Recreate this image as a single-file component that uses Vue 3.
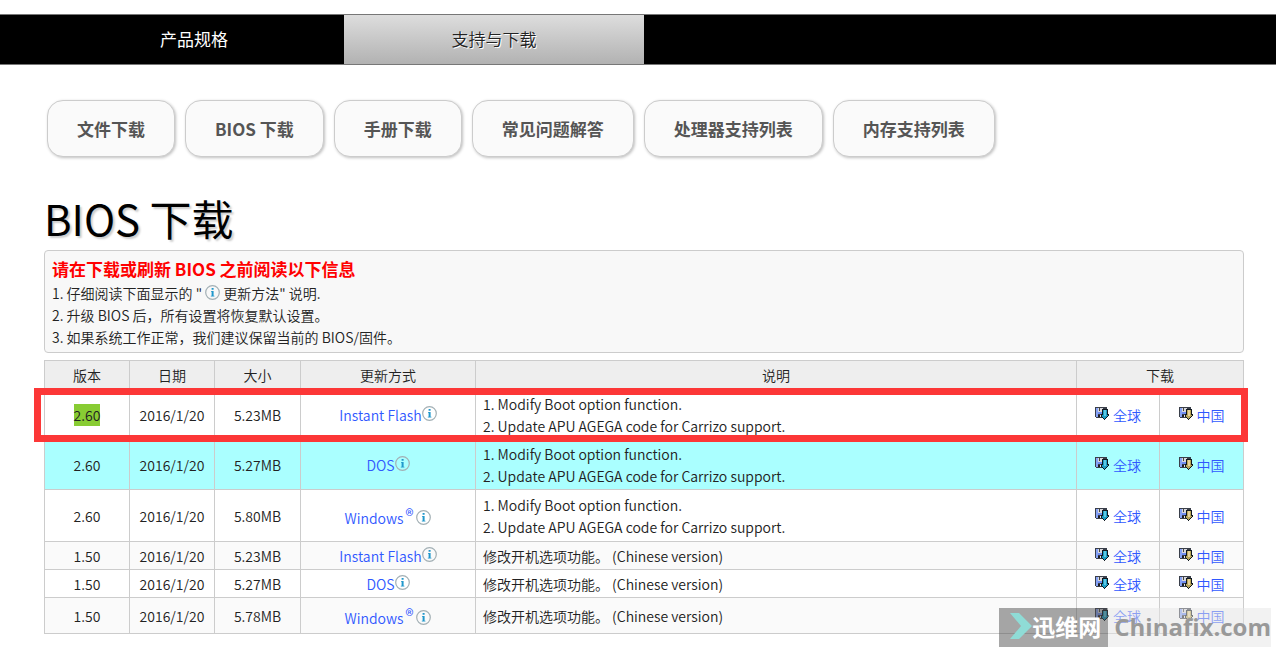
<script setup>
const jumps = ['文件下载', 'BIOS 下载', '手册下载', '常见问题解答', '处理器支持列表', '内存支持列表']
const en = ['1. Modify Boot option function.', '2. Update APU AGEGA code for Carrizo support.']
const zh = ['修改开机选项功能。 (Chinese version)']
const rows = [
  { ver: '2.60', size: '5.23MB', how: 'Instant Flash', notes: en, kind: 'tall', marked: true },
  { ver: '2.60', size: '5.27MB', how: 'DOS', notes: en, kind: 'tall hover' },
  { ver: '2.60', size: '5.80MB', how: 'Windows', reg: true, notes: en, kind: 'taller' },
  { ver: '1.50', size: '5.23MB', how: 'Instant Flash', notes: zh, kind: 'short alt' },
  { ver: '1.50', size: '5.27MB', how: 'DOS', notes: zh, kind: 'short' },
  { ver: '1.50', size: '5.78MB', how: 'Windows', reg: true, notes: zh, kind: 'mid alt' }
]
const mirrors = [
  { label: '全球', arrow: '#1b9cc4', shine: '#5cc8e4' },
  { label: '中国', arrow: '#b8a558', shine: '#e8d49c' }
]
</script>

<template>
  <div class="page">
    <nav class="tabs">
      <a href="#" class="tab">产品规格</a>
      <a href="#" class="tab active">支持与下载</a>
    </nav>

    <main class="content">
      <div class="jumps">
        <a v-for="j in jumps" :key="j" href="#" class="jump">{{ j }}</a>
      </div>

      <h1>BIOS 下载</h1>

      <section class="notice">
        <strong>请在下载或刷新 BIOS 之前阅读以下信息</strong>
        <p>
          1. 仔细阅读下面显示的 "
          <svg class="info" viewBox="0 0 15 15"><circle cx="7.5" cy="7.5" r="6.8" fill="none" stroke="#a3b0b5" stroke-width="1.2" /><path d="M6.6 3h2v1.7h-2zM6 6h2.6v4.8h.8v.8H5.800v-.8h.8V6.800H6z" fill="#2098cc" /></svg>
          更新方法" 说明.
        </p>
        <p>2. 升级 BIOS 后，所有设置将恢复默认设置。</p>
        <p>3. 如果系统工作正常，我们建议保留当前的 BIOS/固件。</p>
      </section>

      <div class="table-wrap">
        <table>
          <colgroup>
            <col class="c-ver" /><col class="c-ver" /><col class="c-size" /><col class="c-how" />
            <col /><col class="c-world" /><col class="c-china" />
          </colgroup>
          <thead>
            <tr>
              <th>版本</th><th>日期</th><th>大小</th><th>更新方式</th><th>说明</th><th colspan="2">下载</th>
            </tr>
          </thead>
          <tbody>
            <tr v-for="(r, i) in rows" :key="i" :class="r.kind">
              <td><mark v-if="r.marked">{{ r.ver }}</mark><template v-else>{{ r.ver }}</template></td>
              <td>2016/1/20</td>
              <td>{{ r.size }}</td>
              <td>
                <div class="how" :class="{ low: r.reg }">
                  <a href="#">{{ r.how }}<sup v-if="r.reg">®</sup></a>
                  <svg class="info" viewBox="0 0 15 15"><circle cx="7.5" cy="7.5" r="6.8" fill="none" stroke="#a3b0b5" stroke-width="1.2" /><path d="M6.6 3h2v1.7h-2zM6 6h2.6v4.8h.8v.8H5.800v-.8h.8V6.800H6z" fill="#2098cc" /></svg>
                </div>
              </td>
              <td class="desc"><div v-for="n in r.notes" :key="n">{{ n }}</div></td>
              <td v-for="m in mirrors" :key="m.label">
                <a href="#" class="dl">
                  <svg class="disk" viewBox="0 0 14 13" shape-rendering="crispEdges">
                    <path d="M0 0h12v11H1V10H0z" fill="#3a3f4a" />
                    <path d="M1 1h2v9H1z" fill="#86a2f4" />
                    <path d="M3 5h4v2H3z" fill="#6f8cf0" />
                    <path d="M3 1h5v4H3z" fill="#d8d8dc" />
                    <path d="M4 1h1v3H4z" fill="#444" />
                    <path d="M3 8h3v2H3z" fill="#1c1c22" />
                    <path d="M5 8h1v2H5z" fill="#e8e8e8" />
                    <path d="M7 2h6v5h1v2h-1v1h-1v1h-1v1h-1v1H9v-1H8v-1H7v-1H6V7h1z" fill="#101820" />
                    <path d="M8 3h4v5h1v1h-1v1h-1v1h-1v1H9v-1H8v-1H7V8h1z" :fill="m.arrow" />
                    <path d="M9 3h2v6H9z" :fill="m.shine" />
                  </svg>
                  <span>{{ m.label }}</span>
                </a>
              </td>
            </tr>
          </tbody>
        </table>
        <div class="frame"></div>
      </div>
    </main>

    <div class="watermark">
      <div class="wm-brand">
        <svg viewBox="0 0 22 26"><path d="M0 0h9l13 13L9 26H0l11-13z" fill="#8fdcd6" /></svg>
        <span>迅维网</span>
      </div>
      <div class="wm-site">Chinafix.com</div>
    </div>
  </div>
</template>

<style>
body {
  background: #fff;
}
</style>

<style scoped>
.page {
  position: relative;
  padding: 14px 0 18px;
  font-family: "Noto Sans CJK SC", sans-serif;
  font-weight: 350;
  font-size: 14px;
  line-height: 22px;
  color: #222;
}
a {
  color: #3058ff;
  text-decoration: none;
}
.tabs {
  display: flex;
  height: 49px;
  padding-left: 44px;
  background: #000;
  border-top: 1px solid #777;
  border-bottom: 1px solid #777;
}
.tab {
  width: 300px;
  text-align: center;
  font-size: 17px;
  line-height: 47px;
  font-weight: 400;
  color: #fff;
}
.tab.active {
  color: #222;
  font-weight: 350;
  background: linear-gradient(#ddd, #b2b2b2);
  text-shadow: 1px 1px 0 #fff;
}
.content {
  margin: 0 32px 0 44px;
}
.jumps {
  display: flex;
  gap: 10px;
  padding: 35px 3px 0;
}
.jump {
  padding: 0 29px;
  line-height: 55px;
  font-size: 17px;
  font-weight: 700;
  color: #555;
  background: #fafafa;
  border: 1px solid #ccc;
  border-radius: 16px;
  box-shadow: 1px 1px 3px rgba(0, 0, 0, 0.25);
  white-space: nowrap;
}
h1 {
  margin: 31px 0 0;
  padding-bottom: 2px;
  font-size: 42px;
  line-height: 60px;
  font-weight: 400;
  color: #000;
  text-shadow: 2px 2px 2px #ccc;
}
.notice {
  padding: 7px 7px 4px;
  background: #f8f8f8;
  border: 1px solid #ccc;
  border-radius: 4px;
}
.notice strong {
  display: block;
  margin-bottom: 2px;
  font-size: 17px;
  font-weight: 700;
  color: #f00;
}
.notice p {
  margin: 0;
}
.info {
  width: 15px;
  height: 15px;
}
.notice .info {
  vertical-align: -1px;
}
.table-wrap {
  position: relative;
  margin-top: 7px;
}
table {
  width: 100%;
  table-layout: fixed;
  border-collapse: collapse;
}
.c-ver {
  width: 85px;
}
.c-size {
  width: 86px;
}
.c-how {
  width: 175px;
}
.c-world {
  width: 83px;
}
.c-china {
  width: 84px;
}
th, td {
  padding: 0;
  border: 1px solid #ccc;
  text-align: center;
}
th {
  height: 28px;
  background: #eee;
  font-weight: 350;
}
.tall td {
  height: 49px;
}
.taller td {
  height: 51px;
}
.short td {
  height: 27px;
}
.mid td {
  height: 35px;
}
.alt {
  background: #fafafa;
}
.hover {
  background: #aff;
}
td.desc {
  padding-left: 7px;
  text-align: left;
}
mark {
  display: inline-block;
  background: #8c3;
  color: inherit;
}
.how {
  display: flex;
  justify-content: center;
}
.how .info {
  margin-top: 2px;
}
.how.low {
  padding-top: 5px;
}
.how.low .info {
  margin: 3px 0 0 3px;
}
sup {
  padding-left: 2px;
  font-size: 17px;
  line-height: 1px;
  vertical-align: 2px;
}
.dl {
  display: flex;
  justify-content: center;
  gap: 4px;
}
.disk {
  width: 14px;
  height: 13px;
  margin-top: 3px;
}
.frame {
  position: absolute;
  top: 28px;
  left: -10px;
  right: -4px;
  height: 40px;
  border: 7px solid #fc3737;
}
.watermark {
  position: absolute;
  right: 5px;
  bottom: 5px;
  display: flex;
  height: 39px;
  line-height: 38px;
}
.wm-brand {
  display: flex;
  align-items: center;
  padding: 0 7px 4px 11px;
  background: rgba(80, 80, 80, 0.5);
  color: #fff;
  font-size: 23px;
  font-weight: 700;
}
.wm-brand svg {
  width: 22px;
  height: 26px;
}
.wm-site {
  padding: 0 0 0 6px;
  background: rgba(230, 230, 230, 0.5);
  color: #999;
  font-family: "Open Sans", sans-serif;
  font-weight: 700;
  font-size: 24px;
}
</style>
